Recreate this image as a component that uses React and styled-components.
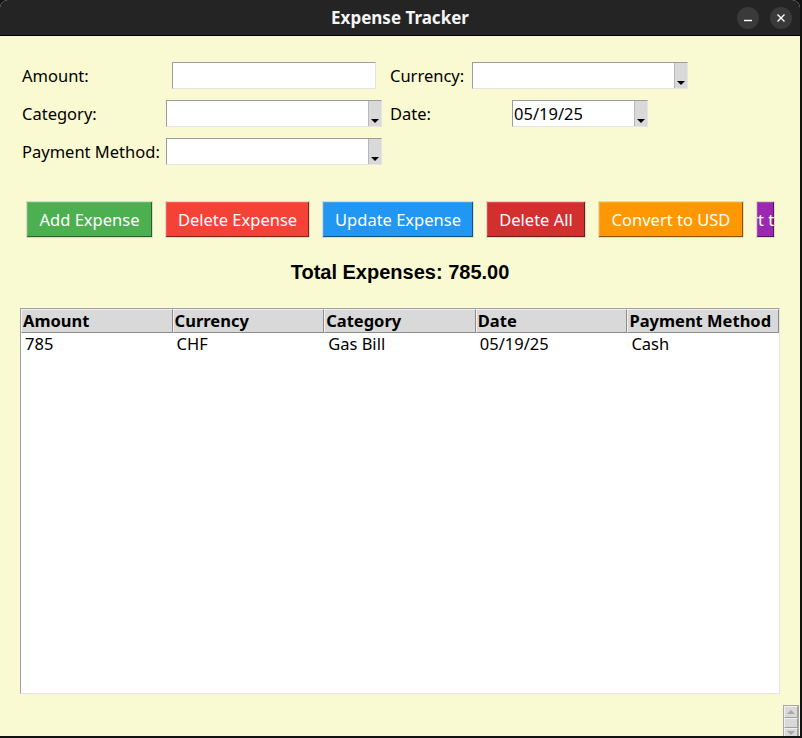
import React from 'react';
import styled, { createGlobalStyle } from 'styled-components';

const GlobalStyle = createGlobalStyle`
  html, body {
    margin: 0;
    padding: 0;
    background: #121212;
  }
  body {
    width: 802px;
    height: 738px;
    overflow: hidden;
    font-family: 'Noto Sans', 'Liberation Sans', sans-serif;
  }
`;

const Window = styled.div`
  width: 800px;
  height: 736px;
  display: flex;
  flex-direction: column;
  background: #fafad2;
  border-radius: 8px 8px 0 0;
  overflow: hidden;
`;

const TitleBar = styled.header`
  flex: none;
  height: 35px;
  background: #242424;
  border-bottom: 1px solid #000;
  display: grid;
  grid-template-columns: 1fr auto 1fr;
  align-items: center;
`;

const Title = styled.h1`
  grid-column: 2;
  margin: 0;
  font-size: 17px;
  font-weight: 700;
  color: #f4f4f4;
`;

const Controls = styled.div`
  justify-self: end;
  display: flex;
  gap: 11px;
  padding-right: 8px;
`;

const ControlButton = styled.span`
  width: 22px;
  height: 22px;
  border-radius: 50%;
  background: #3a3a3a;
  display: flex;
  align-items: center;
  justify-content: center;
`;

const Body = styled.main`
  flex: 1;
  display: flex;
  flex-direction: column;
`;

const Form = styled.div`
  display: grid;
  grid-template-columns: 144px 216px 90px 216px;
  grid-template-rows: 27px 27px 27px;
  row-gap: 11px;
  align-items: center;
  padding: 26px 0 0 22px;
`;

const Label = styled.span`
  font-size: 16.5px;
  color: #000;
  padding-left: ${(p) => (p.$indent ? '8px' : '0')};
  white-space: nowrap;
`;

const Sunken = styled.div`
  box-sizing: border-box;
  height: 27px;
  width: ${(p) => p.$width}px;
  justify-self: center;
  background: #fff;
  border: 1px solid;
  border-color: #9c9c9c #e4e4e4 #e4e4e4 #9c9c9c;
  display: flex;
  align-items: stretch;
`;

const FieldText = styled.span`
  flex: 1;
  font-size: 16.5px;
  line-height: 25px;
  padding-left: 1px;
  color: #000;
`;

const ArrowBox = styled.span`
  width: 12px;
  background: #d9d9d9;
  border-left: 1px solid #b8b8b8;
  display: flex;
  flex-direction: column;
  justify-content: flex-end;
  align-items: center;
  padding-bottom: 3px;
  &::after {
    content: '';
    width: 0;
    height: 0;
    border-left: 4px solid transparent;
    border-right: 4px solid transparent;
    border-top: 4px solid #000;
  }
`;

const ButtonRow = styled.div`
  display: flex;
  gap: 12px;
  padding-left: 26px;
  margin-top: 36px;
`;

const ActionButton = styled.button`
  box-sizing: border-box;
  flex: none;
  height: 37px;
  width: ${(p) => p.$w}px;
  padding: 0;
  display: flex;
  align-items: center;
  justify-content: center;
  overflow: hidden;
  white-space: nowrap;
  font-family: 'Noto Sans', sans-serif;
  font-size: 16.5px;
  color: #fff;
  background: ${(p) => p.$bg};
  border: 1px solid #dcdcc4;
  box-shadow: inset -1px -1px 0 rgba(0, 0, 0, 0.45), inset 1px 1px 0 rgba(255, 255, 255, 0.15);
  border-radius: 0;
`;

const Total = styled.div`
  margin-top: 22px;
  text-align: center;
  font-family: 'Liberation Sans', Arial, sans-serif;
  font-weight: 700;
  font-size: 20px;
  line-height: 24px;
  color: #000;
`;

const Table = styled.div`
  margin: 24px 20px 0;
  height: 386px;
  box-sizing: border-box;
  background: #fff;
  border: 1px solid;
  border-color: #a0a0a0 #e4e4e4 #e4e4e4 #a0a0a0;
`;

const Row = styled.div`
  display: grid;
  grid-template-columns: repeat(5, 1fr);
`;

const HeadCell = styled.div`
  box-sizing: border-box;
  height: 24px;
  background: #d9d9d9;
  border-top: 1px solid #f2f2f2;
  border-left: 1px solid #f2f2f2;
  border-right: 1px solid #8c8c8c;
  border-bottom: 1px solid #8c8c8c;
  font-weight: 700;
  font-size: 16.5px;
  line-height: 21px;
  padding-left: 1px;
  color: #000;
  white-space: nowrap;
  overflow: hidden;
`;

const Cell = styled.div`
  height: 23px;
  font-size: 16.5px;
  line-height: 22px;
  padding-left: 4px;
  color: #000;
`;

const Footer = styled.div`
  display: flex;
  justify-content: flex-end;
  padding: 11px 1px 0 0;
`;

const ScrollBar = styled.div`
  width: 14px;
  display: flex;
  flex-direction: column;
  border: 1px solid #a8a8a8;
  border-bottom: none;
  background: #d9d9d9;
`;

const ScrollPart = styled.span`
  box-sizing: border-box;
  height: ${(p) => p.$h}px;
  border: 1px solid;
  border-color: #f0f0f0 #a0a0a0 #a0a0a0 #f0f0f0;
  display: flex;
  align-items: center;
  justify-content: center;
  &::after {
    content: '';
    display: ${(p) => (p.$dir ? 'block' : 'none')};
    border-left: 4px solid transparent;
    border-right: 4px solid transparent;
    ${(p) => (p.$dir === 'up' ? 'border-bottom: 4px solid #a8a8a8;' : 'border-top: 4px solid #a8a8a8;')}
  }
`;

const columns = ['Amount', 'Currency', 'Category', 'Date', 'Payment Method'];
const rows = [['785', 'CHF', 'Gas Bill', '05/19/25', 'Cash']];

const buttons = [
  { label: 'Add Expense', bg: '#4caf50', w: 127 },
  { label: 'Delete Expense', bg: '#f44336', w: 145 },
  { label: 'Update Expense', bg: '#2196f3', w: 152 },
  { label: 'Delete All', bg: '#d32f2f', w: 100 },
  { label: 'Convert to USD', bg: '#ff9800', w: 146 },
  { label: 'Export to CSV', bg: '#9c27b0', w: 19 },
];

const Combo = ({ width, value }) => (
  <Sunken $width={width}>
    <FieldText>{value}</FieldText>
    <ArrowBox />
  </Sunken>
);

export default function App() {
  return (
    <>
      <GlobalStyle />
      <Window>
        <TitleBar>
          <Title>Expense Tracker</Title>
          <Controls>
            <ControlButton>
              <svg width="10" height="10" viewBox="0 0 10 10">
                <line x1="1" y1="7.5" x2="9" y2="7.5" stroke="#fff" strokeWidth="1.4" />
              </svg>
            </ControlButton>
            <ControlButton>
              <svg width="10" height="10" viewBox="0 0 10 10">
                <path d="M1.5 1.5 L8.5 8.5 M8.5 1.5 L1.5 8.5" stroke="#fff" strokeWidth="1.4" />
              </svg>
            </ControlButton>
          </Controls>
        </TitleBar>
        <Body>
          <Form>
            <Label>Amount:</Label>
            <Sunken $width={204} />
            <Label $indent>Currency:</Label>
            <Combo width={216} />

            <Label>Category:</Label>
            <Combo width={216} />
            <Label $indent>Date:</Label>
            <Combo width={136} value="05/19/25" />

            <Label>Payment Method:</Label>
            <Combo width={216} />
          </Form>

          <ButtonRow>
            {buttons.map((b) => (
              <ActionButton key={b.label} $bg={b.bg} $w={b.w}>
                {b.label}
              </ActionButton>
            ))}
          </ButtonRow>

          <Total>Total Expenses: 785.00</Total>

          <Table>
            <Row>
              {columns.map((c) => (
                <HeadCell key={c}>{c}</HeadCell>
              ))}
            </Row>
            {rows.map((r, i) => (
              <Row key={i}>
                {r.map((v, j) => (
                  <Cell key={j}>{v}</Cell>
                ))}
              </Row>
            ))}
          </Table>

          <Footer>
            <ScrollBar>
              <ScrollPart $h={12} $dir="up" />
              <ScrollPart $h={10} />
              <ScrollPart $h={10} $dir="down" />
            </ScrollBar>
          </Footer>
        </Body>
      </Window>
    </>
  );
}
